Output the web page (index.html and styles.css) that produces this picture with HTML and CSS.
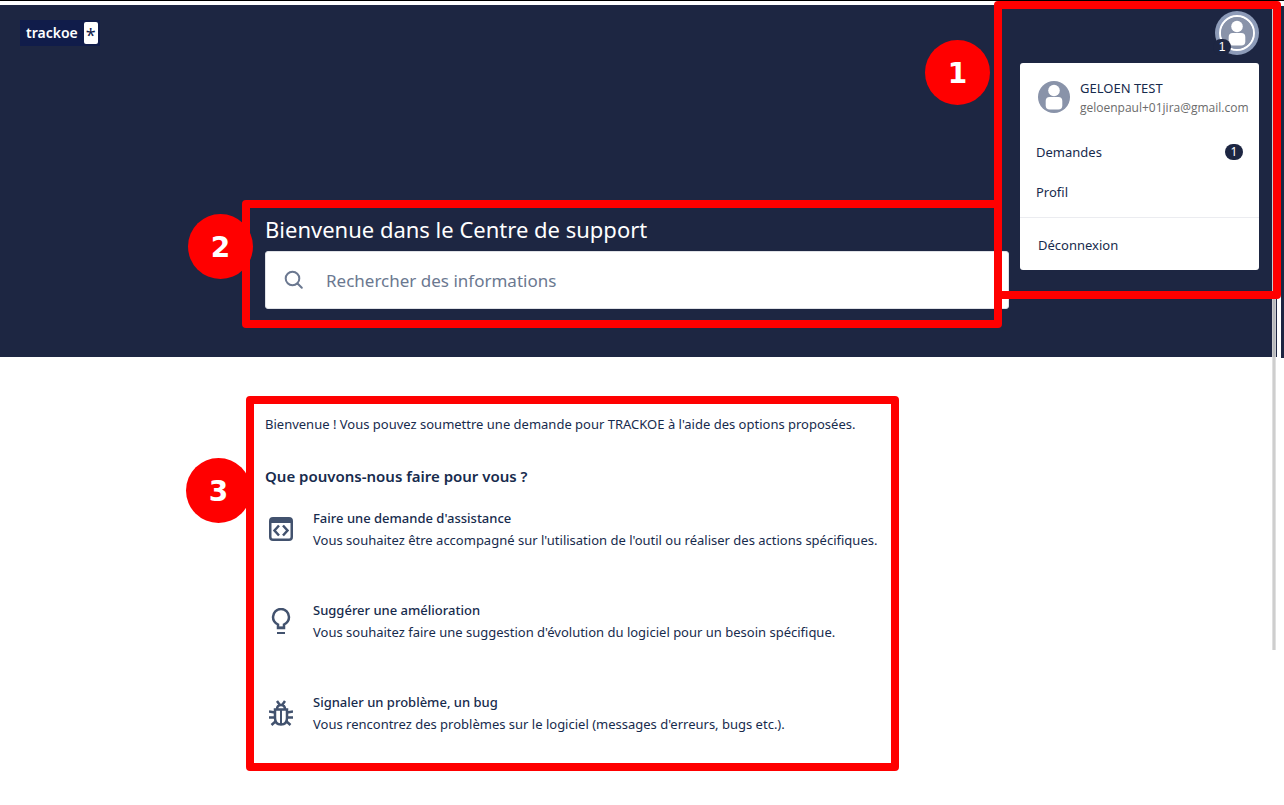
FILE: index.html
```html
<!DOCTYPE html>
<html lang="fr">
<head>
<meta charset="UTF-8">
<title>Centre de support - trackoe</title>
<link rel="stylesheet" href="styles.css">
</head>
<body>
<div class="band">
	<header class="hero">
		<div class="topbar">
			<a href="#" class="logo">trackoe <b>*</b></a>
			<div class="account">
				<button type="button" class="avatar_btn" aria-label="Compte">
					<svg class="avatar" viewBox="0 0 32 32"><circle cx="16" cy="16" r="16"/><circle class="fg" cx="16" cy="9.5" r="5.8"/><rect class="fg" x="7.7" y="16" width="16.6" height="12.4" rx="4"/></svg>
					<span class="notif">1</span>
				</button>
				<div class="menu">
					<div class="profile">
						<svg class="avatar" viewBox="0 0 32 32"><circle cx="16" cy="16" r="16"/><circle class="fg" cx="16" cy="9.5" r="5.8"/><rect class="fg" x="7.7" y="16" width="16.6" height="12.4" rx="4"/></svg>
						<div>
							<p class="name">GELOEN TEST</p>
							<p class="mail">geloenpaul+01jira@gmail.com</p>
						</div>
					</div>
					<a href="#">Demandes <span class="count">1</span></a>
					<a href="#">Profil</a>
					<a href="#" class="logout">Déconnexion</a>
				</div>
			</div>
		</div>
		<div class="container">
			<h1>Bienvenue dans le Centre de support</h1>
			<form class="search">
				<svg viewBox="0 0 20 20"><circle cx="8.5" cy="8.5" r="6.8"/><path d="M13.5 13.5L17.8 17.8"/></svg>
				<input type="search" aria-label="Rechercher des informations" placeholder="Rechercher des informations">
			</form>
			<div class="frame frame_search"></div>
			<span class="step step_search">2</span>
		</div>
	</header>
	<div class="edge"></div>
	<div class="frame frame_account"></div>
	<span class="step step_account">1</span>
	<div class="scrollbar"></div>
</div>

<main class="container">
	<p class="intro">Bienvenue ! Vous pouvez soumettre une demande pour TRACKOE à l'aide des options proposées.</p>
	<h2>Que pouvons-nous faire pour vous ?</h2>
	<ul class="requests">
		<li>
			<svg viewBox="0 0 24 26"><path fill-rule="evenodd" d="M4 1H20Q24 1 24 5V21Q24 25 20 25H4Q0 25 0 21V5Q0 1 4 1ZM2.5 7V21Q2.5 22.5 4 22.5H20Q21.5 22.5 21.5 21V7Z"/><path class="line" d="M10 9.5L5.5 14.5L10 19.5M14 9.5L18.5 14.5L14 19.5"/></svg>
			<a href="#"><b>Faire une demande d'assistance</b><span>Vous souhaitez être accompagné sur l'utilisation de l'outil ou réaliser des actions spécifiques.</span></a>
		</li>
		<li>
			<svg viewBox="0 0 24 26"><path class="line" d="M9 20V16.5C6 15 4 12.5 4 9A8 8 0 0 1 20 9C20 12.5 18 15 15 16.5V20Z"/><path d="M8 18.5H16V21H8ZM8 24H16V26H8Z"/></svg>
			<a href="#"><b>Suggérer une amélioration</b><span>Vous souhaitez faire une suggestion d'évolution du logiciel pour un besoin spécifique.</span></a>
		</li>
		<li>
			<svg viewBox="0 0 24 26"><path class="line" d="M6 9.5H18V18C18 22.5 15.5 24.5 12 24.5S6 22.5 6 18Z"/><path class="thin" d="M12 9.5V25"/><path class="line" d="M8 9.5C8 6.5 9.5 5 12 5S16 6.5 16 9.5M8 1L10.5 4.5M16 1L13.5 4.5"/><path class="line" d="M6 12.5L0 11.5M6 17.5H0M7 21L2.5 25M18 12.5L24 11.5M18 17.5H24M17 21L21.5 25"/></svg>
			<a href="#"><b>Signaler un problème, un bug</b><span>Vous rencontrez des problèmes sur le logiciel (messages d'erreurs, bugs etc.).</span></a>
		</li>
	</ul>
	<div class="frame frame_requests"></div>
	<span class="step step_requests">3</span>
</main>
</body>
</html>
```

FILE: styles.css
```css
html, body, p, h1, h2, ul { margin:0; padding:0; }
* { box-sizing:border-box; }
body { font:14px/20px "Noto Sans","Open Sans",sans-serif; color:#172B4D; background:#FFF; }
a { color:inherit; text-decoration:none; }
ul { list-style:none; }

/* header band */
.band { position:relative; display:flex; gap:4px; padding-top:4px; border-top:1px solid #000; }
.hero { flex:1; padding:0 3px 48px 0; background:#1D2642; }
.edge { width:3px; margin:1px 0 -1px; background:#1D2642; }
.topbar { display:flex; justify-content:space-between; align-items:flex-start; height:208px; padding:6px 15px 0 20px; }
.logo { display:flex; align-items:center; gap:6px; height:26px; margin-top:9px; padding:0 2px 0 6px; font-size:14px; font-weight:600; color:#FFF; background:#101C4A; }
.logo b { width:14px; height:22px; font-size:18px; font-weight:400; line-height:26px; text-align:center; color:#101C4A; background:#FFF; border-radius:2px; }

/* account */
.account { position:relative; }
.avatar { display:block; width:32px; height:32px; fill:#8993A9; }
.avatar .fg { fill:#FFF; }
.avatar_btn { position:relative; display:block; width:44px; height:44px; padding:4px; background:#8D9BB8; border:0; border-radius:50%; }
.avatar_btn .avatar { width:36px; height:36px; border:2px solid #FFF; border-radius:50%; }
.notif, .count { width:18px; height:16px; font-size:12px; line-height:16px; text-align:center; color:#FFF; background:#1D2642; border-radius:8px; }
.notif { position:absolute; left:-2px; bottom:0; }
.menu { position:absolute; top:52px; right:0; z-index:2; width:239px; padding:15px 0 5px; background:#FFF; border-radius:3px; }
.profile { display:flex; align-items:center; gap:10px; height:38px; margin-bottom:16px; padding-left:18px; }
.name { padding-top:2px; font-size:13px; }
.mail { font:12px/20px "Open Sans",sans-serif; color:#6B6B6B; }
.menu a { display:flex; justify-content:space-between; align-items:center; height:40px; padding:0 16px; font-size:13px; }
.menu .logout { height:48px; margin-top:5px; padding:6px 18px 0; border-top:1px solid #EBECF0; }

/* content */
.container { position:relative; width:744px; max-width:100%; margin:0 auto; }
h1 { padding-bottom:6px; font-size:22px; font-weight:400; line-height:32px; color:#FFF; }
.search { display:flex; align-items:center; gap:22px; height:58px; padding:0 18px; background:#FFF; border:1px solid #DFE1E6; border-radius:3px; }
.search svg { width:20px; height:20px; fill:none; stroke:#6B7890; stroke-width:2; stroke-linecap:round; }
.search input { flex:1; padding:0; font:17px "Noto Sans",sans-serif; color:#172B4D; background:none; border:0; outline:0; }
.search input::placeholder { color:#6B7890; opacity:1; }
main.container { left:-5px; padding-top:57px; }
.intro { margin-bottom:32px; font-size:13px; }
h2 { margin-bottom:22px; font-size:15px; font-weight:600; line-height:20px; }
.requests li { display:flex; align-items:flex-start; gap:16px; height:92px; }
.requests svg { width:24px; height:26px; margin:8px 4px 0; fill:#42526E; }
.requests .line, .requests .thin { fill:none; stroke:#42526E; stroke-width:2.5; }
.requests .thin { stroke-width:2; }
.requests a { display:flex; flex-direction:column; gap:2px; font-size:13px; }
.requests b { font-weight:500; }

/* numbered annotations */
.frame { position:absolute; border:8px solid #F00; border-radius:4px; pointer-events:none; }
.frame_account { top:0; right:3px; width:287px; height:298px; z-index:3; }
.frame_search { top:-13px; left:-23px; width:760px; height:128px; }
.frame_requests { top:39px; left:-19px; width:653px; height:375px; }
.step { position:absolute; width:65px; height:65px; font:bold 28px/68px "DejaVu Sans",sans-serif; text-align:center; color:#FFF; background:#F00; border-radius:50%; }
.step_account { top:39px; right:294px; }
.step_search { top:1px; left:-77px; }
.step_requests { top:101px; left:-79px; }
.scrollbar { position:absolute; top:4px; right:8px; width:4px; height:645px; background:#C9C9C9; border:1px solid #DDD; border-width:0 1px; opacity:.9; }
```
